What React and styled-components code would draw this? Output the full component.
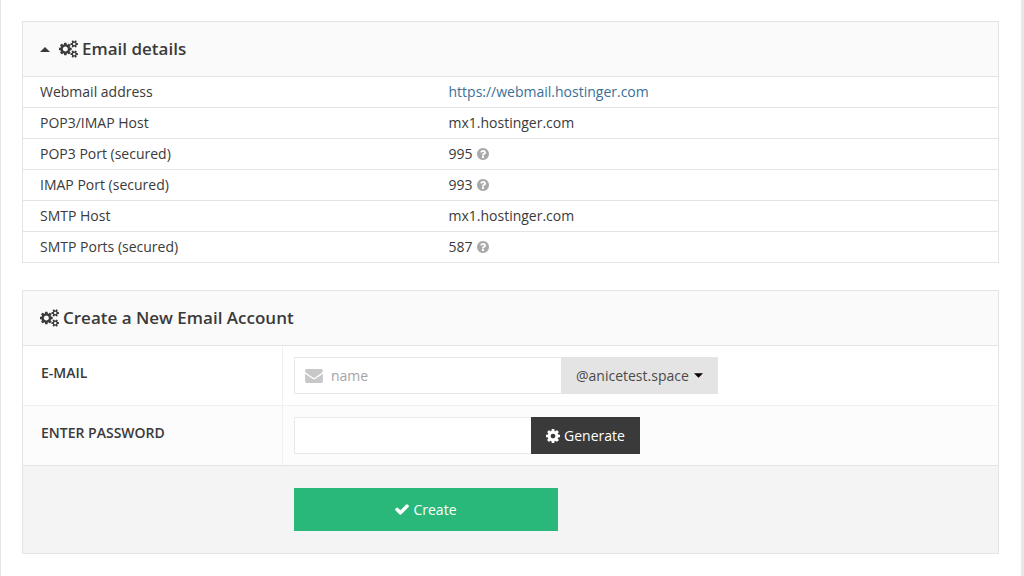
import React, { useState } from "react";
import styled, { createGlobalStyle } from "styled-components";

const SMALL_COG =
  "v140q0 16-149 31-12 27-30 52 51 113 51 138 0 4-4 7-122 71-124 71-8 0-46-47t-52-68q-20 2-30 2t-30-2q-14 21-52 68t-46 47q-2 0-124-71-4-3-4-7 0-25 51-138-18-25-30-52-149-15-149-31v-140q0-16 149-31 13-29 30-52-51-113-51-138 0-4 4-7 4-2 35-20t59-34 30-16q8 0 46 46.500t52 67.500q20-2 30-2t30 2q51-71 92-112l6-2q4 0 124 70 4 3 4 7 0 25-51 138 17 23 30 52 149 15 149 31z";

const CogsIcon = () => (
  <Icon viewBox="-64 0 1920 1792" $width={19} $height={18}>
    <path
      d={
        "M832 896q0-106-75-181t-181-75-181 75-75 181 75 181 181 75 181-75 75-181zm768 512q0-52-38-90t-90-38-90 38-38 90q0 53 37.500 90.500t90.500 37.500 90.500-37.500 37.500-90.500zm0-1024q0-52-38-90t-90-38-90 38-38 90q0 53 37.500 90.500t90.500 37.500 90.500-37.500 37.500-90.500zm-384 421v185q0 10-7 19.500t-16 10.500l-155 24q-11 35-32 76 34 48 90 115 7 11 7 20 0 12-7 19-23 30-82.500 89.500t-78.500 59.500q-11 0-21-7l-115-90q-37 19-77 31-11 108-23 155-7 24-30 24h-186q-11 0-20-7.500t-10-17.500l-23-153q-34-10-75-31l-118 89q-7 7-20 7-11 0-21-8-144-133-144-160 0-9 7-19 10-14 41-53t47-61q-23-44-35-82l-152-24q-10-1-17-9.500t-7-19.500v-185q0-10 7-19.500t16-10.500l155-24q11-35 32-76-34-48-90-115-7-11-7-20 0-12 7-20 22-30 82-89t79-59q11 0 21 7l115 90q34-18 77-32 11-108 23-154 7-24 30-24h186q11 0 20 7.500t10 17.500l23 153q34 10 75 31l118-89q8-7 20-7 11 0 21 8 144 133 144 160 0 8-7 19-12 16-42 54t-45 60q23 48 34 82l152 23q10 2 17 10.500t7 19.500z" +
        "M1856 1338" +
        SMALL_COG +
        "M1856 314" +
        SMALL_COG
      }
    />
  </Icon>
);

const CogIcon = () => (
  <Icon viewBox="128 128 1536 1536" $width={14} $height={14}>
    <path d="M1152 896q0-106-75-181t-181-75-181 75-75 181 75 181 181 75 181-75 75-181zm512-109v222q0 12-8 23t-20 13l-185 28q-19 54-39 91 35 50 107 138 10 12 10 25t-9 23q-27 37-99 108t-94 71q-12 0-26-9l-138-108q-44 23-91 38-16 136-29 186-7 28-36 28h-222q-14 0-24.500-8.500t-11.500-21.500l-28-184q-49-16-90-37l-141 107q-10 9-25 9-14 0-25-11-126-114-165-168-7-10-7-23 0-12 8-23 15-21 51-66.500t54-70.500q-27-50-41-99l-183-27q-13-2-21-12.500t-8-23.500v-222q0-12 8-23t19-13l186-28q14-46 39-92-40-57-107-138-10-12-10-24 0-10 9-23 26-36 98.500-107.500t94.500-71.500q13 0 26 10l138 107q44-23 91-38 16-136 29-186 7-28 36-28h222q14 0 24.500 8.500t11.500 21.500l28 184q49 16 90 37l142-107q9-9 24-9 13 0 25 10 129 119 165 170 7 8 7 22 0 12-8 23-15 21-51 66.500t-54 70.500q26 50 41 98l183 28q13 2 21 12.500t8 23.500z" />
  </Icon>
);

const CheckIcon = () => (
  <Icon viewBox="121 334 1550 1188" $width={14} $height={11}>
    <path d="M1671 566q0 40-28 68l-724 724-136 136q-28 28-68 28t-68-28l-136-136-362-362q-28-28-28-68t28-68l136-136q28-28 68-28t68 28l294 295 656-657q28-28 68-28t68 28l136 136q28 28 28 68z" />
  </Icon>
);

const EnvelopeIcon = () => (
  <Icon viewBox="0 256 1792 1408" $width={18} $height={14}>
    <path d="M1792 710v794q0 66-47 113t-113 47h-1472q-66 0-113-47t-47-113v-794q44 49 101 87 362 246 497 345 57 42 92.500 65.500t94.500 48 110 24.500h2q51 0 110-24.500t94.500-48 92.500-65.500q170-123 498-345 57-39 100-87zm0-294q0 79-49 151t-122 123q-376 261-468 325-10 7-42.500 31t-54 38.500-52 32.500-57.500 27-50 9h-2q-23 0-50-9t-57.500-27-52-32.500-54-38.500-42.500-31q-91-64-262-182.500t-205-142.500q-62-42-117-115.500t-55-136.500q0-78 41.500-130t118.500-52h1472q65 0 112.500 47t47.500 113z" />
  </Icon>
);

const QuestionIcon = () => (
  <Icon viewBox="128 128 1536 1536" $width={12} $height={12}>
    <path d="M1024 1376v-192q0-14-9-23t-23-9h-192q-14 0-23 9t-9 23v192q0 14 9 23t23 9h192q14 0 23-9t9-23zm256-672q0-88-55.500-163t-138.500-116-170-41q-243 0-371 213-15 24 8 42l132 100q7 6 19 6 16 0 25-12 53-68 86-92 34-24 86-24 48 0 85.500 26t37.500 59q0 38-20 61t-68 45q-63 28-115.500 86.500t-52.500 125.500v36q0 14 9 23t23 9h192q14 0 23-9t9-23q0-19 21.500-49.500t54.500-49.500q32-18 49-28.500t46-35 44.500-48 28-60.500 12.500-81zm384 192q0 209-103 385.500t-279.500 279.500-385.500 103-385.500-103-279.500-279.500-103-385.500 103-385.500 279.500-279.500 385.500-103 385.500 103 279.500 279.500 103 385.500z" />
  </Icon>
);

const details = [
  { label: "Webmail address", value: "https://webmail.hostinger.com", link: true },
  { label: "POP3/IMAP Host", value: "mx1.hostinger.com" },
  { label: "POP3 Port (secured)", value: "995", help: true },
  { label: "IMAP Port (secured)", value: "993", help: true },
  { label: "SMTP Host", value: "mx1.hostinger.com" },
  { label: "SMTP Ports (secured)", value: "587", help: true },
];

const EmailDetails = () => {
  const [open, setOpen] = useState(true);

  return (
    <Panel>
      <PanelHeader>
        <Title>
          <Toggle type="button" aria-expanded={open} onClick={() => setOpen(!open)}>
            <Caret viewBox="0 0 10 5" $width={10} $height={5} $flip={!open}>
              <path d="M0 5L5 0l5 5z" />
            </Caret>
            <TitleText>
              <CogsIcon />
              Email details
            </TitleText>
          </Toggle>
        </Title>
      </PanelHeader>
      {open && (
        <Table>
          <tbody>
            {details.map((row) => (
              <tr key={row.label}>
                <th scope="row">{row.label}</th>
                <td>
                  <Value>
                    {row.link ? <Link href={row.value}>{row.value}</Link> : row.value}
                    {row.help && (
                      <Help type="button" aria-label={`About ${row.label}`}>
                        <QuestionIcon />
                      </Help>
                    )}
                  </Value>
                </td>
              </tr>
            ))}
          </tbody>
        </Table>
      )}
    </Panel>
  );
};

const CreateAccount = () => {
  const [name, setName] = useState("");
  const [password, setPassword] = useState("");

  const generate = () => setPassword(Math.random().toString(36).slice(2, 12));

  return (
    <Panel>
      <PanelHeader>
        <Title>
          <TitleText>
            <CogsIcon />
            Create a New Email Account
          </TitleText>
        </Title>
      </PanelHeader>
      <form onSubmit={(e) => e.preventDefault()}>
        <FormRow>
          <Label htmlFor="email">E-MAIL</Label>
          <Field>
            <InputBox $width={267}>
              <EnvelopeIcon />
              <Input
                id="email"
                placeholder="name"
                value={name}
                onChange={(e) => setName(e.target.value)}
              />
            </InputBox>
            <Domain>
              <select aria-label="Domain">
                <option>@anicetest.space</option>
              </select>
              <Caret viewBox="0 0 10 5" $width={9} $height={5} $flip>
                <path d="M0 5L5 0l5 5z" />
              </Caret>
            </Domain>
          </Field>
        </FormRow>
        <FormRow $shaded>
          <Label htmlFor="password">ENTER PASSWORD</Label>
          <Field>
            <InputBox $width={237}>
              <Input
                id="password"
                value={password}
                onChange={(e) => setPassword(e.target.value)}
              />
            </InputBox>
            <GenerateButton type="button" onClick={generate}>
              <CogIcon />
              Generate
            </GenerateButton>
          </Field>
        </FormRow>
        <FormFooter>
          <CreateButton type="submit">
            <CheckIcon />
            Create
          </CreateButton>
        </FormFooter>
      </form>
    </Panel>
  );
};

const App = () => {
  return (
    <Page>
      <GlobalStyle />
      <EmailDetails />
      <CreateAccount />
    </Page>
  );
};

const GlobalStyle = createGlobalStyle`
  * {
    box-sizing: border-box;
  }
  body {
    margin: 0;
    background: #e8e8e8;
    color: #3a3a3a;
    font: 14px/20px "Open Sans", "Noto Sans", sans-serif;
  }
  button,
  input,
  select {
    font: inherit;
    color: inherit;
  }
`;

const Page = styled.main`
  display: flex;
  flex-direction: column;
  gap: 27px;
  min-height: 100vh;
  margin-right: 3px;
  padding: 21px 22px 21px 21px;
  background: #fff;
  border-left: 1px solid #e4e4e4;
`;

const Icon = styled.svg`
  flex: none;
  width: ${(props) => props.$width}px;
  height: ${(props) => props.$height}px;
  fill: currentColor;
`;

const Caret = styled(Icon)`
  transform: ${(props) => (props.$flip ? "rotate(180deg)" : "none")};
`;

const Panel = styled.section`
  border: 1px solid #e4e4e4;
`;

const PanelHeader = styled.header`
  padding: 15px 17px;
  background: #fafafa;
  border-bottom: 1px solid #e4e4e4;
`;

const Title = styled.h2`
  margin: 0;
  font-size: 17px;
  font-weight: 600;
  line-height: 24px;
`;

const Toggle = styled.button`
  display: flex;
  align-items: center;
  gap: 9px;
  padding: 0;
  border: 0;
  background: none;
  cursor: pointer;
`;

const TitleText = styled.span`
  display: flex;
  align-items: center;
  gap: 4px;
`;

const Table = styled.table`
  width: 100%;
  border-collapse: collapse;
  th,
  td {
    padding: 5px 16px;
    font-weight: 400;
    text-align: left;
  }
  th {
    width: 42%;
    padding-left: 17px;
  }
  tr + tr {
    border-top: 1px solid #e4e4e4;
  }
`;

const Value = styled.div`
  display: flex;
  align-items: center;
  gap: 4px;
`;

const Link = styled.a`
  color: #39709a;
  text-decoration: none;
`;

const Help = styled.button`
  display: flex;
  padding: 0;
  border: 0;
  background: none;
  color: #a9a9a9;
  cursor: pointer;
`;

const FormRow = styled.div`
  display: grid;
  grid-template-columns: 260px 1fr;
  background: ${(props) => (props.$shaded ? "#fcfcfc" : "#fff")};
  border-bottom: 1px solid ${(props) => (props.$shaded ? "#e4e4e4" : "#f0f0f0")};
`;

const Label = styled.label`
  padding: 17px 18px;
  border-right: 1px solid #f0f0f0;
  font-weight: 600;
`;

const Field = styled.div`
  display: flex;
  padding: 11px;
`;

const InputBox = styled.div`
  display: flex;
  align-items: center;
  gap: 8px;
  width: ${(props) => props.$width}px;
  height: 37px;
  padding-left: 10px;
  background: #fff;
  border: 1px solid #e8e8e8;
  border-right: 0;
  color: #c8c8c8;
`;

const Input = styled.input`
  flex: 1;
  min-width: 0;
  padding: 0;
  border: 0;
  outline: 0;
  background: none;
  color: #3a3a3a;
  &::placeholder {
    color: #a5a5a5;
  }
`;

const Domain = styled.div`
  display: flex;
  align-items: center;
  gap: 5px;
  height: 37px;
  padding: 0 15px;
  background: #e4e4e4;
  color: #000;
  select {
    appearance: none;
    padding: 0;
    border: 0;
    background: none;
    color: #4a4a4a;
  }
`;

const Button = styled.button`
  display: flex;
  align-items: center;
  justify-content: center;
  gap: 4px;
  border: 0;
  color: #fff;
  cursor: pointer;
`;

const GenerateButton = styled(Button)`
  height: 37px;
  padding: 0 15px;
  background: #3a3a3a;
`;

const CreateButton = styled(Button)`
  width: 264px;
  height: 43px;
  background: #29b77a;
`;

const FormFooter = styled.div`
  padding: 22px 22px 22px 271px;
  background: #f4f4f4;
`;

export default App;
